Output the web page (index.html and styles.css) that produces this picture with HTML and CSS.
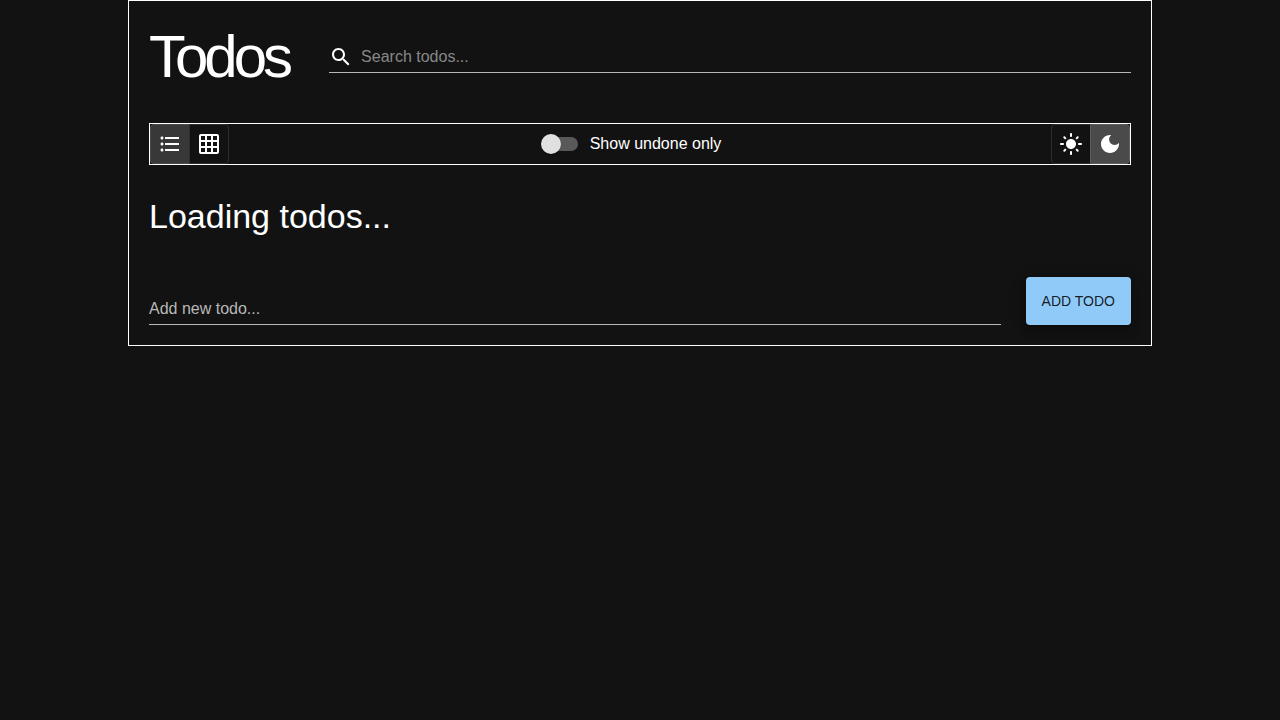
FILE: index.html
```html
<!DOCTYPE html>
<html lang="en">
<head>
<meta charset="utf-8">
<meta name="viewport" content="width=device-width, initial-scale=1">
<title>Todos</title>
<link rel="stylesheet" href="styles.css">
</head>
<body>
<main class="app">
  <header class="header">
    <h1 class="title">Todos</h1>
    <label class="field search">
      <svg class="icon" viewBox="0 0 24 24" aria-hidden="true"><path d="M15.5 14h-.79l-.28-.27C15.41 12.59 16 11.11 16 9.5 16 5.91 13.09 3 9.5 3S3 5.91 3 9.5 5.91 16 9.5 16c1.61 0 3.09-.59 4.23-1.57l.27.28v.79l5 4.99L20.49 19l-4.99-5zm-6 0C7.01 14 5 11.99 5 9.5S7.01 5 9.5 5 14 7.01 14 9.5 11.99 14 9.5 14z"/></svg>
      <input class="field-input" type="text" placeholder="Search todos..." aria-label="Search todos">
    </label>
  </header>

  <div class="toolbar">
    <div class="toggle-group" role="group" aria-label="Layout">
      <button class="toggle toggle-on" type="button" aria-label="List" aria-pressed="true">
        <svg class="icon" viewBox="0 0 24 24" aria-hidden="true"><path d="M4 10.5c-.83 0-1.5.67-1.5 1.5s.67 1.5 1.5 1.5 1.5-.67 1.5-1.5-.67-1.5-1.5-1.5zm0-6c-.83 0-1.5.67-1.5 1.5S3.17 7.5 4 7.5 5.5 6.83 5.5 6 4.83 4.5 4 4.5zm0 12c-.83 0-1.5.68-1.5 1.5s.68 1.5 1.5 1.5 1.5-.68 1.5-1.5-.67-1.5-1.5-1.5zM7 19h14v-2H7v2zm0-6h14v-2H7v2zm0-8v2h14V5H7z"/></svg>
      </button>
      <button class="toggle" type="button" aria-label="Grid" aria-pressed="false">
        <svg class="icon" viewBox="0 0 24 24" aria-hidden="true"><path d="M20 2H4c-1.1 0-2 .9-2 2v16c0 1.1.9 2 2 2h16c1.1 0 2-.9 2-2V4c0-1.1-.9-2-2-2zM8 20H4v-4h4v4zm0-6H4v-4h4v4zm0-6H4V4h4v4zm6 12h-4v-4h4v4zm0-6h-4v-4h4v4zm0-6h-4V4h4v4zm6 12h-4v-4h4v4zm0-6h-4v-4h4v4zm0-6h-4V4h4v4z"/></svg>
      </button>
    </div>

    <label class="switch-label">
      <input class="switch" type="checkbox" role="switch">
      <span>Show undone only</span>
    </label>

    <div class="toggle-group" role="group" aria-label="Theme">
      <button class="toggle" type="button" aria-label="Light" aria-pressed="false">
        <svg class="icon" viewBox="0 0 24 24" aria-hidden="true"><path d="M12 7c-2.76 0-5 2.24-5 5s2.24 5 5 5 5-2.24 5-5-2.24-5-5-5zM2 13h2c.55 0 1-.45 1-1s-.45-1-1-1H2c-.55 0-1 .45-1 1s.45 1 1 1zm18 0h2c.55 0 1-.45 1-1s-.45-1-1-1h-2c-.55 0-1 .45-1 1s.45 1 1 1zM11 2v2c0 .55.45 1 1 1s1-.45 1-1V2c0-.55-.45-1-1-1s-1 .45-1 1zm0 18v2c0 .55.45 1 1 1s1-.45 1-1v-2c0-.55-.45-1-1-1s-1 .45-1 1zM5.99 4.58c-.39-.39-1.03-.39-1.41 0-.39.39-.39 1.03 0 1.41l1.06 1.06c.39.39 1.03.39 1.41 0s.39-1.03 0-1.41L5.99 4.58zm12.37 12.37c-.39-.39-1.03-.39-1.41 0-.39.39-.39 1.03 0 1.41l1.06 1.06c.39.39 1.03.39 1.41 0 .39-.39.39-1.03 0-1.41l-1.06-1.06zm1.06-10.96c.39-.39.39-1.03 0-1.41-.39-.39-1.03-.39-1.41 0l-1.06 1.06c-.39.39-.39 1.03 0 1.41s1.03.39 1.41 0l1.06-1.06zM7.05 18.36c.39-.39.39-1.03 0-1.41-.39-.39-1.03-.39-1.41 0l-1.06 1.06c-.39.39-.39 1.03 0 1.41s1.03.39 1.41 0l1.06-1.06z"/></svg>
      </button>
      <button class="toggle toggle-active" type="button" aria-label="Dark" aria-pressed="true">
        <svg class="icon" viewBox="0 0 24 24" aria-hidden="true"><path d="M12 3c-4.97 0-9 4.03-9 9s4.03 9 9 9 9-4.03 9-9c0-.46-.04-.92-.1-1.36-.98 1.37-2.58 2.26-4.4 2.26-2.98 0-5.4-2.42-5.4-5.4 0-1.81.89-3.42 2.26-4.4-.44-.06-.9-.1-1.36-.1z"/></svg>
      </button>
    </div>
  </div>

  <h2 class="status">Loading todos...</h2>

  <form class="add-form">
    <label class="field">
      <input class="field-input field-input-strong" type="text" placeholder="Add new todo..." aria-label="Add new todo">
    </label>
    <button class="add-button" type="button">ADD TODO</button>
  </form>
</main>
</body>
</html>
```
FILE: styles.css
```css
* {
  box-sizing: border-box;
}

body {
  margin: 0;
  background: #121212;
  color: #fff;
  font: 16px/24px "Liberation Sans", Arial, sans-serif;
}

.app {
  width: 80%;
  margin: 0 auto;
  padding: 20px;
  border: 1px solid #fff;
}

.header {
  display: flex;
  align-items: center;
  gap: 40px;
  margin-bottom: 30px;
}

.title {
  margin: 0;
  font-size: 60px;
  font-weight: 400;
  line-height: 72px;
  letter-spacing: -4px;
}

.field {
  display: flex;
  flex: 1;
  align-items: center;
  gap: 8px;
  height: 32px;
  border-bottom: 1px solid #b8b8b8;
}

.field-input {
  flex: 1;
  min-width: 0;
  height: 31px;
  padding: 0;
  border: 0;
  outline: 0;
  background: none;
  color: #fff;
  font: inherit;
}

.field-input::placeholder {
  color: #888;
  opacity: 1;
}

.field-input-strong::placeholder {
  color: #b8b8b8;
}

.icon {
  display: block;
  flex: none;
  width: 24px;
  height: 24px;
  fill: #fff;
}

.toolbar {
  display: flex;
  align-items: center;
  justify-content: space-between;
  margin-bottom: 30px;
  border: 1px solid #fff;
}

.toggle-group {
  display: flex;
}

.toggle {
  padding: 7px;
  border: 1px solid #2e2e2e;
  background: none;
}

.toggle:first-child {
  border-radius: 4px 0 0 4px;
}

.toggle:last-child {
  margin-left: -1px;
  border-radius: 0 4px 4px 0;
}

.toggle-on {
  border-color: #4b4b4b;
  background: #383838;
}

.toggle-active {
  border-color: #5c5c5c;
  background: #4a4a4a;
}

.switch-label {
  display: flex;
  align-items: center;
  gap: 12px;
  margin-right: 15px;
}

.switch {
  position: relative;
  width: 34px;
  height: 14px;
  margin: 0;
  border-radius: 7px;
  appearance: none;
  background: #595959;
}

.switch::before {
  content: "";
  position: absolute;
  top: -3px;
  left: -3px;
  width: 20px;
  height: 20px;
  border-radius: 50%;
  background: #e0e0e0;
  box-shadow: 0 2px 1px -1px rgba(0, 0, 0, 0.2), 0 1px 1px rgba(0, 0, 0, 0.14), 0 1px 3px rgba(0, 0, 0, 0.12);
}

.switch:checked::before {
  left: 17px;
}

.status {
  margin: 0 0 40px;
  font-size: 34px;
  font-weight: 400;
  line-height: 42px;
}

.add-form {
  display: flex;
  align-items: flex-end;
  gap: 25px;
}

.add-button {
  height: 48px;
  padding: 0 16px;
  border: 0;
  border-radius: 4px;
  background: #90caf9;
  color: rgba(0, 0, 0, 0.87);
  font: 14px/24px "Liberation Sans", Arial, sans-serif;
  box-shadow: 0 3px 5px -1px rgba(0, 0, 0, 0.2), 0 6px 10px rgba(0, 0, 0, 0.14), 0 1px 18px rgba(0, 0, 0, 0.12);
}
```
